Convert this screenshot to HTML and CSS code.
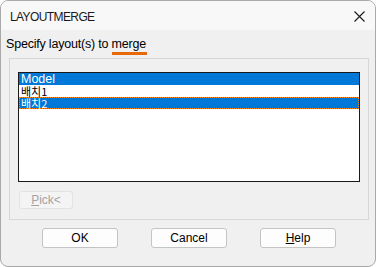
FILE: index.html
```html
<!DOCTYPE html>
<html lang="ko">
<head>
  <meta charset="UTF-8" />
  <title>LAYOUTMERGE</title>
  <link rel="stylesheet" href="styles.css">
</head>
<body>
  <div class="window">
    <div class="titlebar">
      <span class="title">LAYOUTMERGE</span>
      <svg class="close" width="11" height="11" viewBox="0 0 11 11">
        <path d="M0.5 0.5 L10.5 10.5 M10.5 0.5 L0.5 10.5" stroke="#1a1a1a" stroke-width="1.1" fill="none"/>
      </svg>
    </div>
    <div class="content">
      <p class="prompt">Specify layout(s) to <span class="mark">merge</span></p>
      <div class="group">
        <div class="listbox">
          <div class="row latin selected">Model</div>
          <div class="row">배치1</div>
          <div class="row selected focused">배치2</div>
        </div>
        <button class="btn pick" disabled><u>P</u>ick&lt;</button>
      </div>
      <div class="actions">
        <button class="btn">OK</button>
        <button class="btn">Cancel</button>
        <button class="btn"><u>H</u>elp</button>
      </div>
    </div>
  </div>
</body>
</html>
```

FILE: styles.css
```css
* { box-sizing: border-box; }
body {
  margin: 0;
  background: #fff;
  font-family: "Liberation Sans", Arial, sans-serif;
  font-size: 12px;
  color: #000;
}
.window {
  width: 376px;
  height: 267px;
  border: 1px solid #a9a9a9;
  border-radius: 8px;
  overflow: hidden;
  background: #f0f0f0;
  display: flex;
  flex-direction: column;
}
.titlebar {
  height: 29px;
  flex: none;
  display: flex;
  align-items: center;
  padding: 0 10px 0 9px;
  background: #f8f8f8;
}
.title {
  font-size: 12px;
  letter-spacing: -0.6px;
  color: #1a1a1a;
  padding-top: 2px;
}
.close { margin-left: auto; margin-top: 1px; }
.content { padding: 0 6px 0 8px; }
.prompt {
  margin: 6px 0 0 -3px;
  height: 22px;
  line-height: 16px;
  font-size: 12.5px;
  letter-spacing: -0.2px;
}
.mark {
  display: inline-block;
  line-height: 14px;
  border-bottom: 3px solid #e8690a;
  padding: 0 1px 1px 0;
}
.group {
  height: 162px;
  border: 1px solid #d7d7d7;
  padding: 13px 8px 0 8px;
}
.listbox {
  height: 110px;
  border: 1px solid #1a1a1a;
  background: #fff;
}
.row {
  display: flex;
  align-items: center;
  height: 12px;
  padding-left: 2px;
  font-family: "Noto Sans CJK KR", sans-serif;
  font-size: 11px;
  line-height: 1;
  white-space: nowrap;
}
.row.latin { font-family: "Liberation Sans", Arial, sans-serif; font-size: 12.5px; }
.row.selected { background: #0078d7; color: #fff; }
.row.focused { outline: 1px dotted #ff8a00; outline-offset: -1px; }
.btn {
  height: 20px;
  width: 76px;
  padding: 0;
  border: 1px solid #c4c4c4;
  border-radius: 3px;
  background: #fdfdfd;
  font-family: "Liberation Sans", Arial, sans-serif;
  font-size: 12px;
  color: #000;
}
.btn u { text-underline-offset: 1px; }
.pick {
  display: block;
  width: 54px;
  height: 18px;
  margin: 9px 0 0 1px;
  background: #f4f4f4;
  border-color: #e3e3e3;
  color: #a3a3a3;
}
.actions {
  display: flex;
  gap: 33px;
  margin: 8px 0 0 33px;
}
```
